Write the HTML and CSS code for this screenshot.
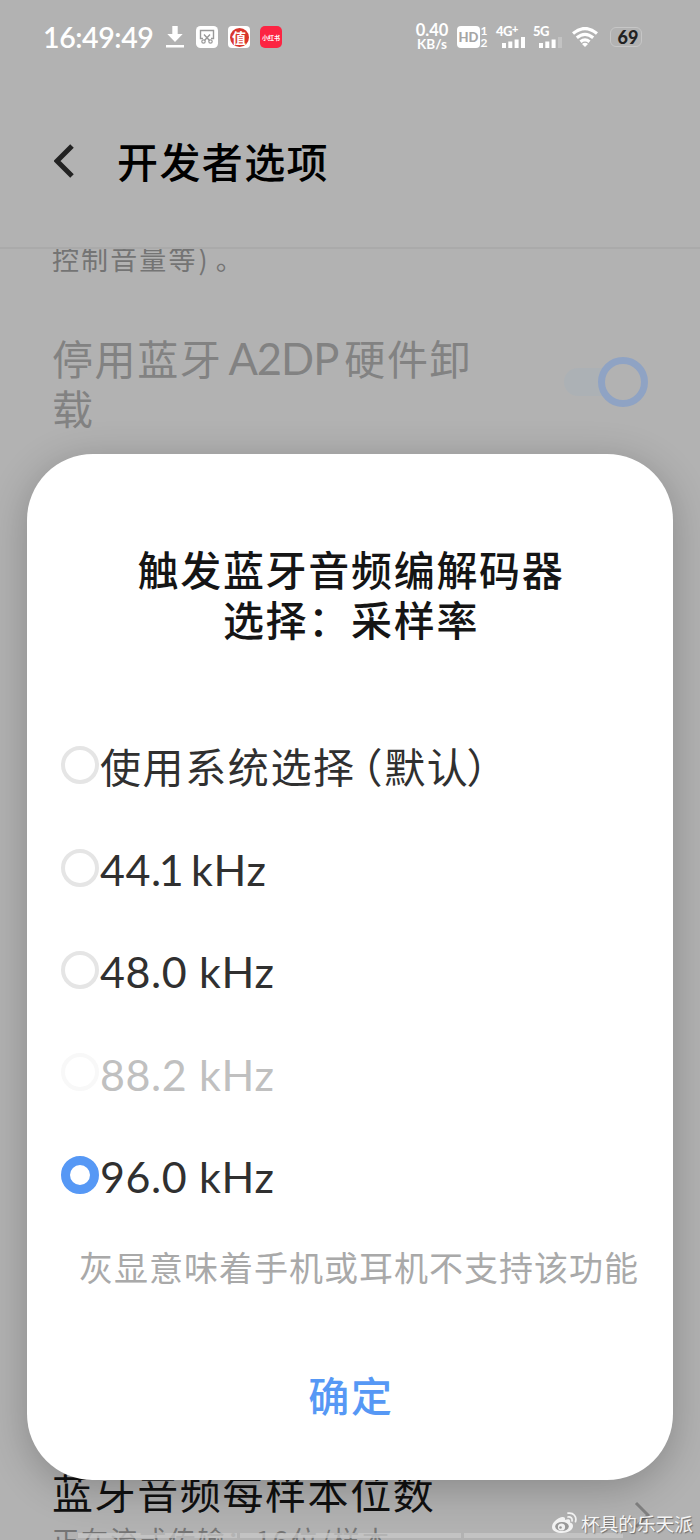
FILE: index.html
```
<!DOCTYPE html>
<html lang="zh-CN">
  <head>
    <meta charset="UTF-8" />
    <meta name="viewport" content="width=device-width, initial-scale=1.0" />
    <title>开发者选项</title>
    <link rel="stylesheet" href="styles.css">
  </head>
  <body>
    <div class="screen">
      <div class="status-bar">
        <span class="clock">16:49:49</span>
        <svg class="icon-download" width="18" height="22" viewBox="0 0 18 22">
          <path d="M6.3 0h5.4v8h5L9 16 1.300 8h5zM0 19h18v2.600H0z" fill="#fff" />
        </svg>
        <svg class="icon-app" width="22" height="22" viewBox="0 0 22 22">
          <rect width="22" height="22" rx="4.500" fill="#fff" />
          <path d="M7 12.500H4.500v-8h13v8H15M8 8.500l5.500 6M14 8.500l-5.500 6" fill="none" stroke="#999" stroke-width="1.400" />
          <circle cx="7.500" cy="15.500" r="1.700" fill="none" stroke="#999" stroke-width="1.200" />
          <circle cx="14.500" cy="15.500" r="1.700" fill="none" stroke="#999" stroke-width="1.200" />
        </svg>
        <span class="app-zhi"><span>值</span></span>
        <span class="app-red">小红书</span>
        <div class="status-right">
          <div class="speed"><span>0.40</span><span>KB/s</span></div>
          <span class="hd">HD</span>
          <div class="sim"><span>1</span><span>2</span></div>
          <div class="signal signal-4g">
            <span>4G<sup>+</sup></span>
            <svg width="23" height="11" viewBox="0 0 23 11">
              <path d="M0 6h4v5H0zM6.300 4.500h4V11h-4zM12.600 2.500h4V11h-4zM19 0h4v11h-4z" fill="#fff" />
            </svg>
          </div>
          <div class="signal signal-5g">
            <span>5G</span>
            <svg width="23" height="11" viewBox="0 0 23 11">
              <path d="M0 6h4v5H0zM6.300 4.500h4V11h-4zM12.600 2.500h4V11h-4z" fill="#fff" />
              <path d="M19 0h4v11h-4z" fill="#c3c3c3" />
            </svg>
          </div>
          <svg class="icon-wifi" width="26" height="20" viewBox="0 0 26 20">
            <path d="M1 6.500Q13-3.500 25 6.500M4.800 10.800Q13 4 21.200 10.800M8.500 14.800Q13 11 17.500 14.800" fill="none" stroke="#fff" stroke-width="3.200" />
            <path d="M10 17q3-2.500 6 0l-3 3z" fill="#fff" />
          </svg>
          <span class="battery">69</span>
        </div>
      </div>

      <div class="header">
        <svg class="icon-back" width="20" height="34" viewBox="0 0 20 34">
          <path d="M18 2L3 17l15 15" fill="none" stroke="#222" stroke-width="5" />
        </svg>
        <h1>开发者选项</h1>
      </div>

      <div class="settings">
        <p class="summary clipped">控制音量等<span class="paren-close">)</span>。</p>
        <div class="row">
          <div class="row-title disabled">停用蓝牙<span class="latin">A2DP</span>硬件卸<br />载</div>
          <div class="switch"><div class="knob"></div></div>
        </div>
        <div class="row bottom-row">
          <div>
            <div class="row-title">蓝牙音频每样本位数</div>
            <p class="summary">正在流式传输：16 位/样本</p>
          </div>
          <svg class="icon-next" width="16" height="28" viewBox="0 0 16 28">
            <path d="M2 2l12 12L2 26" fill="none" stroke="#808080" stroke-width="3" />
          </svg>
        </div>
      </div>

      <div class="dialog">
        <h2>触发蓝牙音频编解码器<br />选择：采样率</h2>
        <div class="option">
          <span class="radio"></span>
          <span class="option-cn">使用系统选择<span class="open">（</span>默认<span class="close">）</span></span>
        </div>
        <div class="option"><span class="radio"></span><span class="label">44.<span class="one">1</span> kHz</span></div>
        <div class="option"><span class="radio"></span><span class="label">48.0 kHz</span></div>
        <div class="option off"><span class="radio"></span><span class="label">88.2 kHz</span></div>
        <div class="option"><span class="radio checked"></span><span class="label">96.0 kHz</span></div>
        <p class="note">灰显意味着手机或耳机不支持该功能</p>
        <div class="confirm">确定</div>
      </div>

      <div class="progress"><i></i><i></i><i></i></div>
      <div class="watermark">
        <svg width="25" height="22" viewBox="0 0 25 22">
          <path d="M10 5C5 6 0 11 0 15c0 4 5 6 10 6 6 0 11-3 11-7 0-2-1-3-3-3.500C19 7 16 6.500 13 8c.500-2-.500-3.500-3-3z" fill="#f2f2f2" />
          <ellipse cx="10" cy="14.500" rx="6.800" ry="4.600" fill="#999" />
          <circle cx="9.500" cy="15" r="3.600" fill="#f2f2f2" />
          <circle cx="8.500" cy="15.500" r="1.300" fill="#999" />
          <path d="M16 5c3-.500 4.500 1.500 4 4M16 1.200c5.500-1 9 3.500 7.500 8.500" fill="none" stroke="#f2f2f2" stroke-width="1.700" stroke-linecap="round" />
        </svg>
        <span>杯具的乐天派</span>
      </div>
    </div>
  </body>
</html>
```
FILE: styles.css
```
* {
  box-sizing: border-box;
}
body {
  margin: 0;
  font-family: Lato, "Noto Sans CJK SC", sans-serif;
}
h1,
h2,
p {
  margin: 0;
}
svg {
  display: block;
  flex-shrink: 0;
}
.screen {
  position: relative;
  width: 700px;
  height: 1540px;
  overflow: hidden;
  background-color: #b2b2b2;
}

/* Status bar */
.status-bar {
  display: flex;
  align-items: center;
  height: 74px;
  padding-left: 43px;
  color: #fff;
}
.clock {
  width: 123px;
  font-size: 28.5px;
  font-weight: 600;
  letter-spacing: -0.4px;
  line-height: 30px;
  white-space: nowrap;
}
.icon-app {
  margin-left: 12px;
}
.app-zhi,
.app-red {
  display: flex;
  align-items: center;
  justify-content: center;
  width: 22px;
  height: 22px;
  margin-left: 10px;
  border-radius: 4px;
  background-color: #fff;
  font-family: "Noto Sans CJK SC", sans-serif;
}
.app-zhi span {
  width: 19px;
  height: 19px;
  border-radius: 50%;
  background-color: #d9362c;
  font-size: 14px;
  font-weight: bold;
  line-height: 18px;
  text-align: center;
}
.app-red {
  border-radius: 5px;
  background-color: #fc2442;
  font-size: 6px;
  font-weight: bold;
}
.status-right {
  display: flex;
  align-items: center;
  margin-left: 132px;
}
.speed {
  display: flex;
  flex-direction: column;
  align-items: center;
  width: 36px;
  font-size: 16.5px;
  font-weight: bold;
  line-height: 15px;
}
.speed span + span {
  font-size: 13.5px;
  line-height: 13px;
}
.hd {
  width: 23px;
  height: 22px;
  margin-left: 7px;
  border-radius: 4px;
  background-color: #fff;
  color: #a5a5a5;
  font-size: 13px;
  font-weight: 900;
  line-height: 22px;
  text-align: center;
}
.sim {
  display: flex;
  flex-direction: column;
  width: 8px;
  font-size: 12px;
  font-weight: bold;
  line-height: 12px;
  text-align: center;
}
.signal {
  display: flex;
  flex-direction: column;
  height: 22px;
  font-size: 13px;
  font-weight: 900;
  letter-spacing: -0.5px;
  line-height: 11px;
}
.signal svg {
  margin-left: 6px;
}
.signal sup {
  font-size: 11px;
  line-height: 0;
  vertical-align: 3px;
}
.signal-4g {
  width: 30px;
  margin-left: 8px;
}
.signal-5g {
  width: 30px;
  margin-left: 7px;
}
.icon-wifi {
  margin-left: 9px;
}
.battery {
  width: 32px;
  height: 20px;
  margin-left: 12px;
  padding-left: 4px;
  border: 1px solid #c6c6c6;
  border-radius: 6px;
  color: #222;
  font-size: 18px;
  font-weight: 900;
  line-height: 19px;
  text-align: center;
}

/* Page header */
.header {
  display: flex;
  align-items: center;
  height: 175px;
  padding: 0 0 2px 54px;
  border-bottom: 2px solid #aaa;
}
.icon-back {
  margin-top: 2px;
}
.header h1 {
  margin-left: 43px;
  color: #000;
  font-family: "Noto Sans CJK SC", sans-serif;
  font-size: 41px;
  font-weight: 500;
  letter-spacing: 1.4px;
}

/* Settings list */
.settings {
  font-family: "Noto Sans CJK SC", sans-serif;
}
.summary {
  color: #747474;
  font-size: 27px;
  letter-spacing: 2.1px;
  line-height: 38px;
  white-space: nowrap;
}
.clipped {
  display: flex;
  align-items: flex-end;
  height: 29px;
  padding-left: 52px;
  overflow: hidden;
}
.paren-close {
  margin: 0 6px 0 1px;
}
.row {
  display: flex;
  align-items: center;
  justify-content: space-between;
  padding: 54px 52px 20px;
}
.row-title {
  color: #101010;
  font-size: 41px;
  letter-spacing: 1.6px;
  line-height: 50px;
  white-space: nowrap;
}
.row-title.disabled {
  color: #828282;
}
.row-title .latin {
  margin: 0 6px 0 6px;
  font-family: Lato, sans-serif;
  font-size: 43.5px;
  letter-spacing: -1px;
  line-height: 40px;
}
.switch {
  display: flex;
  justify-content: flex-end;
  align-items: center;
  width: 84px;
  height: 28px;
  border-radius: 14px;
  background: linear-gradient(90deg, #acb1b5 70%, transparent 70%);
}
.knob {
  width: 50px;
  height: 50px;
  flex-shrink: 0;
  border: 7px solid #8fa3c4;
  border-radius: 50%;
  background-color: #b2b2b2;
}
.bottom-row {
  align-items: flex-start;
  margin-top: 959px;
  padding: 55px 50px 0 52px;
}
.bottom-row .summary {
  margin-top: 5px;
  word-spacing: -7px;
}
.icon-next {
  margin-top: 35px;
}

/* Dialog */
.dialog {
  position: absolute;
  top: 454px;
  left: 27px;
  width: 646px;
  height: 1026px;
  padding-top: 89px;
  border-radius: 66px;
  background-color: #fff;
  box-shadow: 0 8px 40px rgba(0, 0, 0, 0.24);
  font-family: "Noto Sans CJK SC", sans-serif;
}
.dialog h2 {
  margin-bottom: 71px;
  padding-left: 2px;
  color: #151515;
  font-size: 41px;
  font-weight: 500;
  letter-spacing: 1.7px;
  line-height: 50px;
  text-align: center;
}
.option {
  display: flex;
  align-items: center;
  height: 102.4px;
  padding-left: 34px;
  color: #303030;
  white-space: nowrap;
}
.radio {
  width: 38px;
  height: 38px;
  flex-shrink: 0;
  margin: 0 1px 0 0;
  border: 4px solid #e5e5e5;
  border-radius: 50%;
}
.radio.checked {
  border: 9px solid #5698f5;
}
.option-cn {
  font-size: 41px;
  letter-spacing: 1.6px;
}
.option .open {
  margin-left: -14px;
}
.option .close {
  margin-left: -3px;
}
.option .label {
  padding-top: 4px;
  font-family: Lato, "Noto Sans CJK SC", sans-serif;
  font-size: 43px;
  letter-spacing: 0.6px;
}
.option .one {
  margin: 0 -5px 0 -3px;
}
.option.off {
  color: #c0c0c0;
}
.option.off .radio {
  border-color: #f8f8f8;
}
.note {
  margin-top: 16px;
  padding-left: 52px;
  color: #a9a9a9;
  font-size: 34px;
  letter-spacing: 1px;
  line-height: 50px;
  white-space: nowrap;
}
.confirm {
  margin-top: 75px;
  padding-left: 2px;
  color: #5698f5;
  font-size: 41px;
  font-weight: 500;
  letter-spacing: 1.7px;
  line-height: 54px;
  text-align: center;
}

/* Gesture bar and watermark lie over the page */
.progress {
  position: absolute;
  left: 78px;
  top: 1533px;
  display: grid;
  grid-template-columns: 159px 221px 159px;
  gap: 3px;
}
.progress i {
  height: 5px;
  background-color: rgba(200, 200, 200, 0.75);
}
.watermark {
  position: absolute;
  right: 7px;
  bottom: 2px;
  display: flex;
  align-items: center;
  gap: 4px;
  color: #f5f5f5;
  font-family: "Noto Sans CJK SC", sans-serif;
  font-size: 18.7px;
  line-height: 30px;
  text-shadow: 1px 1px 1px rgba(60, 60, 60, 0.6);
}
```
